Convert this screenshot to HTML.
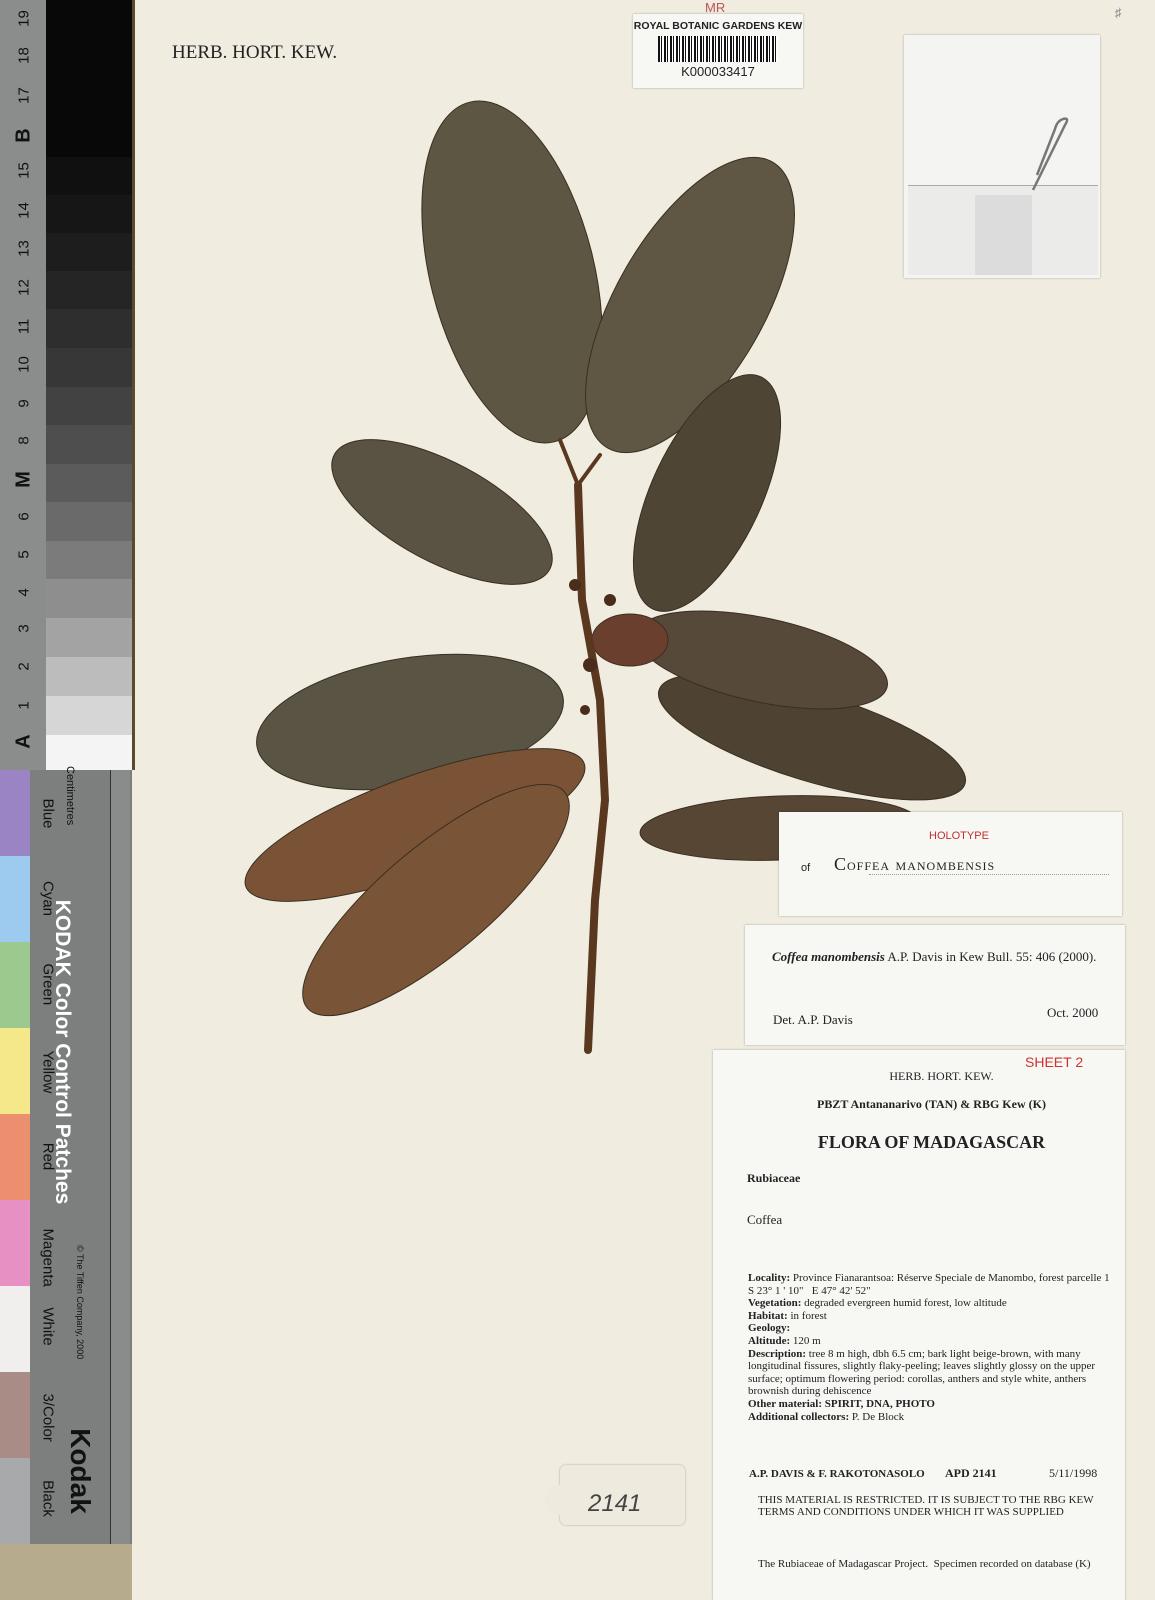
<!DOCTYPE html>
<html><head><meta charset="utf-8"><style>
*{margin:0;padding:0;box-sizing:border-box}
body{width:1155px;height:1600px;position:relative;overflow:hidden;background:#f0ece0;font-family:"Liberation Serif",serif;color:#222}
.a{position:absolute}
.lbl{position:absolute;background:#f7f7f4;box-shadow:0 0 2px rgba(0,0,0,.3)}
.gp{position:absolute;left:46px;width:86px}
.num{position:absolute;left:6px;width:36px;text-align:center;font-family:"Liberation Sans",sans-serif;font-size:15px;color:#111;transform:rotate(-90deg)}
.cp{position:absolute;left:0;width:30px}
.cl{position:absolute;left:28px;width:40px;font-family:"Liberation Sans",sans-serif;font-size:15px;color:#111;transform:rotate(90deg);text-align:center;white-space:nowrap}
</style></head><body>
<div class="a" style="left:0;top:0;width:48px;height:770px;background:#8a8d8c"></div>
<div class="gp" style="top:0;height:157px;background:#080808"></div>
<div class="gp" style="top:157px;height:38px;background:#101010"></div>
<div class="gp" style="top:195px;height:38px;background:#161616"></div>
<div class="gp" style="top:233px;height:38px;background:#1d1d1d"></div>
<div class="gp" style="top:271px;height:38px;background:#252525"></div>
<div class="gp" style="top:309px;height:39px;background:#2e2e2e"></div>
<div class="gp" style="top:348px;height:39px;background:#373737"></div>
<div class="gp" style="top:387px;height:38px;background:#424242"></div>
<div class="gp" style="top:425px;height:39px;background:#4e4e4e"></div>
<div class="gp" style="top:464px;height:38px;background:#5b5b5b"></div>
<div class="gp" style="top:502px;height:39px;background:#6a6a6a"></div>
<div class="gp" style="top:541px;height:38px;background:#7b7b7b"></div>
<div class="gp" style="top:579px;height:39px;background:#8e8e8e"></div>
<div class="gp" style="top:618px;height:39px;background:#a3a3a3"></div>
<div class="gp" style="top:657px;height:39px;background:#bcbcbc"></div>
<div class="gp" style="top:696px;height:39px;background:#d6d6d6"></div>
<div class="gp" style="top:735px;height:35px;background:#f4f4f4"></div>
<div class="a" style="left:132px;top:0;width:3px;height:770px;background:#5a4a30"></div>
<div class="num" style="top:10px">19</div><div class="num" style="top:47px">18</div><div class="num" style="top:87px">17</div>
<div class="num" style="top:124px;font-weight:bold;font-size:20px">B</div>
<div class="num" style="top:162px">15</div><div class="num" style="top:202px">14</div><div class="num" style="top:240px">13</div><div class="num" style="top:279px">12</div><div class="num" style="top:318px">11</div><div class="num" style="top:356px">10</div><div class="num" style="top:395px">9</div><div class="num" style="top:432px">8</div>
<div class="num" style="top:468px;font-weight:bold;font-size:20px">M</div>
<div class="num" style="top:508px">6</div><div class="num" style="top:546px">5</div><div class="num" style="top:584px">4</div><div class="num" style="top:620px">3</div><div class="num" style="top:658px">2</div><div class="num" style="top:697px">1</div>
<div class="num" style="top:730px;font-weight:bold;font-size:20px">A</div>
<div class="a" style="left:0;top:770px;width:132px;height:830px;background:#7d7f7e"></div>
<div class="a" style="left:110px;top:770px;width:20px;height:775px;background:#8a8c8b;border-left:1px solid #333"></div>
<div class="cp" style="top:770px;height:86px;background:#9b84c4"></div>
<div class="cp" style="top:856px;height:86px;background:#9ccbef"></div>
<div class="cp" style="top:942px;height:86px;background:#9bc98e"></div>
<div class="cp" style="top:1028px;height:86px;background:#f5e88a"></div>
<div class="cp" style="top:1114px;height:86px;background:#ec8f6e"></div>
<div class="cp" style="top:1200px;height:86px;background:#e690c4"></div>
<div class="cp" style="top:1286px;height:86px;background:#f0efed"></div>
<div class="cp" style="top:1372px;height:86px;background:#a98c86"></div>
<div class="cp" style="top:1458px;height:86px;background:#a8a9ab"></div>
<div class="a" style="left:0;top:1544px;width:132px;height:56px;background:#b7ab8e"></div>
<div class="cl" style="top:805px">Blue</div><div class="cl" style="top:890px">Cyan</div><div class="cl" style="top:975px">Green</div><div class="cl" style="top:1062px">Yellow</div><div class="cl" style="top:1148px">Red</div><div class="cl" style="top:1240px">Magenta</div><div class="cl" style="top:1318px">White</div><div class="cl" style="top:1405px">3/Color</div><div class="cl" style="top:1490px">Black</div>
<div class="a" style="left:-113px;top:1040px;width:350px;text-align:center;white-space:nowrap;font-family:'Liberation Sans',sans-serif;font-weight:bold;font-size:21px;color:#fff;transform:rotate(90deg)">KODAK Color Control Patches</div>
<div class="a" style="left:20px;top:1300px;width:120px;font-family:'Liberation Sans',sans-serif;font-size:9px;color:#111;transform:rotate(90deg);white-space:nowrap">© The Tiffen Company, 2000</div>
<div class="a" style="left:30px;top:1455px;width:100px;text-align:center;font-family:'Liberation Sans',sans-serif;font-weight:bold;font-size:28px;color:#111;transform:rotate(90deg)">Kodak</div>
<div class="a" style="left:30px;top:800px;width:80px;font-family:'Liberation Sans',sans-serif;font-size:11px;color:#111;transform:rotate(90deg)">Centimetres</div>
<div class="a" style="left:172px;top:42px;font-size:19px;color:#222">HERB. HORT. KEW.</div>
<svg class="a" style="left:0;top:0" width="1155" height="1600">
<g stroke="#3a2e20" stroke-width="1">
<ellipse cx="512" cy="272" rx="82" ry="175" transform="rotate(-14 512 272)" fill="#5d5642"/>
<ellipse cx="690" cy="305" rx="74" ry="165" transform="rotate(30 690 305)" fill="#5f5644"/>
<ellipse cx="442" cy="512" rx="122" ry="50" transform="rotate(28 442 512)" fill="#5a5242"/>
<ellipse cx="707" cy="493" rx="55" ry="128" transform="rotate(25 707 493)" fill="#4f4535"/>
<ellipse cx="812" cy="737" rx="160" ry="44" transform="rotate(17 812 737)" fill="#4e4232"/>
<ellipse cx="762" cy="660" rx="128" ry="42" transform="rotate(12 762 660)" fill="#56493a"/>
<ellipse cx="780" cy="828" rx="140" ry="32" transform="rotate(-2 780 828)" fill="#574634"/>
<ellipse cx="410" cy="722" rx="155" ry="64" transform="rotate(-9 410 722)" fill="#5a5444"/>
<ellipse cx="415" cy="825" rx="180" ry="48" transform="rotate(-20 415 825)" fill="#7a5336"/>
<ellipse cx="436" cy="900" rx="168" ry="54" transform="rotate(-40 436 900)" fill="#7a5436"/>
<ellipse cx="630" cy="640" rx="38" ry="26" fill="#6b3f2e"/>
</g>
<g stroke="#5a3820" stroke-linecap="round" fill="none">
<path d="M578 485 L582 600 L600 700 L605 800 L595 900 L588 1050" stroke-width="8"/>
<path d="M578 485 L560 440 M578 485 L600 455" stroke-width="4"/>
</g>
<g fill="#4a2c1c"><circle cx="575" cy="585" r="6"/><circle cx="590" cy="665" r="7"/><circle cx="585" cy="710" r="5"/><circle cx="610" cy="600" r="6"/></g>
</svg>
<div class="lbl" style="left:633px;top:14px;width:170px;height:74px;text-align:center;font-family:'Liberation Sans',sans-serif">
<div style="font-size:10.5px;font-weight:bold;margin-top:6px;white-space:nowrap">ROYAL BOTANIC GARDENS KEW</div>
<div style="margin:4px auto 0;width:120px;height:26px;background:repeating-linear-gradient(90deg,#111 0 2px,#fff 2px 3px,#111 3px 4px,#fff 4px 6px)"></div>
<div style="font-size:13px;margin-top:2px">K000033417</div></div>
<div class="a" style="left:705px;top:0;font-size:13px;color:#b55;font-family:'Liberation Sans',sans-serif">MR</div>
<div class="lbl" style="left:904px;top:35px;width:196px;height:243px;background:#f4f4f2"></div>
<div class="a" style="left:908px;top:185px;width:190px;height:90px;background:#ebebea;border-top:1px solid #aaa"></div>
<div class="a" style="left:975px;top:195px;width:57px;height:80px;background:#dcdcdc"></div>
<svg class="a" style="left:1025px;top:115px" width="50" height="80"><path d="M8 75 L40 10 Q45 2 38 4 Q32 6 30 14 L12 60" stroke="#777" stroke-width="2.5" fill="none"/></svg>
<div class="lbl" style="left:779px;top:812px;width:343px;height:104px;font-family:'Liberation Sans',sans-serif">
<div style="position:absolute;left:150px;top:18px;font-size:11px;color:#c03030">HOLOTYPE</div>
<div style="position:absolute;left:22px;top:50px;font-size:11px">of</div>
<div style="position:absolute;left:55px;top:42px;font-size:18px;font-family:'Liberation Serif',serif;letter-spacing:1px">C<span style="font-size:12px">OFFEA</span> <span style="font-size:12px">MANOMBENSIS</span></div>
<div style="position:absolute;left:90px;top:62px;width:240px;border-top:1px dotted #999"></div></div>
<div class="lbl" style="left:745px;top:925px;width:380px;height:120px">
<div style="position:absolute;left:27px;top:24px;font-size:13px"><i><b>Coffea manombensis</b></i> A.P. Davis in Kew Bull. 55: 406 (2000).</div>
<div style="position:absolute;left:28px;top:87px;font-size:13px">Det. A.P. Davis</div>
<div style="position:absolute;left:302px;top:80px;font-size:13px">Oct. 2000</div></div>
<div class="lbl" style="left:713px;top:1050px;width:412px;height:550px;font-size:11px;line-height:12.6px">
<div style="position:absolute;left:312px;top:6px;font-size:14px;color:#d03030;font-family:'Liberation Sans',sans-serif">SHEET 2</div>
<div style="position:absolute;left:0;width:100%;top:20px;text-align:center;font-size:12px;padding-left:45px">HERB. HORT. KEW.</div>
<div style="position:absolute;left:0;width:100%;top:48px;text-align:center;font-size:12px;font-weight:bold;padding-left:25px">PBZT Antananarivo (TAN) &amp; RBG Kew (K)</div>
<div style="position:absolute;left:0;width:100%;top:86px;text-align:center;font-size:18px;font-weight:bold;padding-left:25px">FLORA OF MADAGASCAR</div>
<div style="position:absolute;left:34px;top:122px;font-size:12px;font-weight:bold">Rubiaceae</div>
<div style="position:absolute;left:34px;top:164px;font-size:13px">Coffea</div>
<div style="position:absolute;left:35px;top:222px;width:370px">
<b>Locality:</b> Province Fianarantsoa: Réserve Speciale de Manombo, forest parcelle 1<br>S 23° 1 ' 10"&nbsp;&nbsp;&nbsp;E 47° 42' 52"<br><b>Vegetation:</b> degraded evergreen humid forest, low altitude<br><b>Habitat:</b> in forest<br><b>Geology:</b><br><b>Altitude:</b> 120 m<br><b>Description:</b> tree 8 m high, dbh 6.5 cm; bark light beige-brown, with many longitudinal fissures, slightly flaky-peeling; leaves slightly glossy on the upper surface; optimum flowering period: corollas, anthers and style white, anthers brownish during dehiscence<br><b>Other material: SPIRIT, DNA, PHOTO</b><br><b>Additional collectors:</b> P. De Block</div>
<div style="position:absolute;left:36px;top:418px;font-size:11px;font-weight:bold">A.P. DAVIS &amp; F. RAKOTONASOLO</div>
<div style="position:absolute;left:232px;top:417px;font-size:12px;font-weight:bold">APD 2141</div>
<div style="position:absolute;left:336px;top:417px;font-size:12px">5/11/1998</div>
<div style="position:absolute;left:45px;top:444px;font-size:11px;line-height:12px">THIS MATERIAL IS RESTRICTED. IT IS SUBJECT TO THE RBG KEW<br>TERMS AND CONDITIONS UNDER WHICH IT WAS SUPPLIED</div>
<div style="position:absolute;left:45px;top:508px;font-size:11px">The Rubiaceae of Madagascar Project.&nbsp; Specimen recorded on database (K)</div></div>
<div class="lbl" style="left:560px;top:1465px;width:125px;height:60px;background:#eeeadd;border-radius:6px"></div>
<div class="a" style="left:545px;top:1485px;width:30px;height:30px;border-radius:50%;background:#eeeadd"></div>
<div class="a" style="left:588px;top:1490px;font-size:24px;font-family:'Liberation Sans',sans-serif;color:#444;font-style:italic">2141</div>
<div class="a" style="left:1115px;top:5px;font-size:13px;color:#888">♯</div>
</body></html>
